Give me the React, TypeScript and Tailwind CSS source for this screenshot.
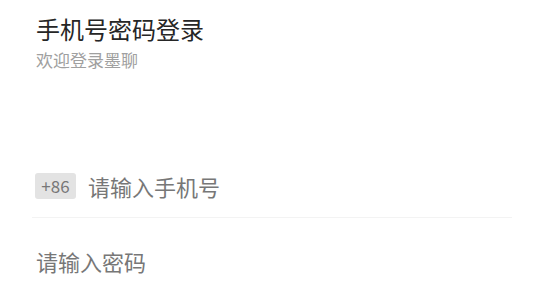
import React from 'react';

const FONT = '"Noto Sans CJK SC", "Noto Sans", sans-serif';

export default function App() {
  return (
    <div className="w-[541px] h-[289px] bg-white overflow-hidden" style={{ fontFamily: FONT }}>
      <div className="pl-[36px] pt-[13px]">
        <h1 className="text-[24px] leading-[32px] text-[#262626]">手机号密码登录</h1>
        <p className="mt-[4px] text-[17px] leading-[22px] text-[#a0a0a0]">欢迎登录墨聊</p>
      </div>

      <div className="mt-[102px] pl-[32px] pr-[29px]">
        <div className="flex items-center gap-[12px] pl-[3px] pb-[18px] border-b border-[#f3f3f3]">
          <span className="h-[26px] w-[41px] rounded-[3px] bg-[#e3e3e3] text-[#777] text-[17px] leading-[26px] text-center">
            +86
          </span>
          <span className="text-[22px] leading-[26px] text-[#777]">请输入手机号</span>
        </div>
        <div className="pt-[30px] pl-[4px]">
          <span className="text-[22px] leading-[26px] text-[#777]">请输入密码</span>
        </div>
      </div>
    </div>
  );
}
